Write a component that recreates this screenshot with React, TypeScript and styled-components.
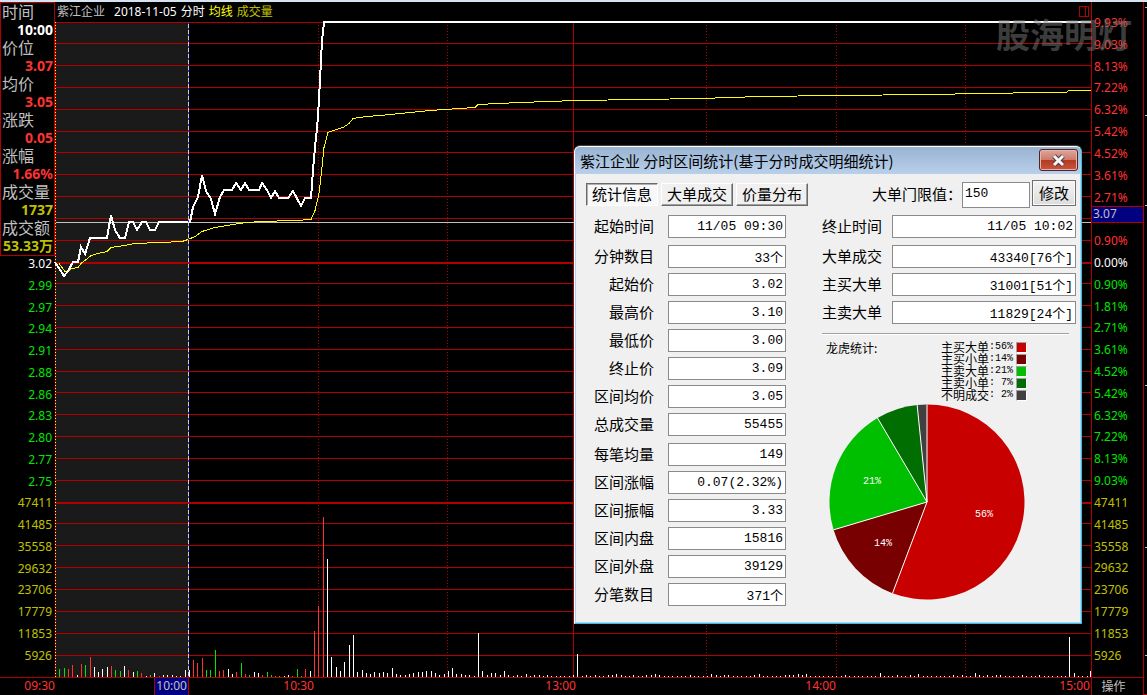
import React from "react";
import styled, { createGlobalStyle, css } from "styled-components";

const RED_LINE = "#b00000";
const RED_TEXT = "#ff3232";
const GREEN_TEXT = "#00e600";
const OLIVE_TEXT = "#c0c000";
const SILVER = "#c0c0c0";
const UI_FONT = `"Noto Sans", "Noto Sans CJK SC", sans-serif`;
const CJK_FONT = `"Noto Sans CJK SC", sans-serif`;
const MONO_FONT = `"Liberation Mono", "Noto Sans CJK SC", monospace`;

/* ---------- data ---------- */

const quote = [
  { label: "时间", value: "10:00", color: "#ffffff" },
  { label: "价位", value: "3.07", color: RED_TEXT },
  { label: "均价", value: "3.05", color: RED_TEXT },
  { label: "涨跌", value: "0.05", color: RED_TEXT },
  { label: "涨幅", value: "1.66%", color: RED_TEXT },
  { label: "成交量", value: "1737", color: OLIVE_TEXT },
  { label: "成交额", value: "53.33万", color: OLIVE_TEXT },
];

const volumeScale = ["47411", "41485", "35558", "29632", "23706", "17779", "11853", "5926"];
const lowerPrices = ["2.99", "2.97", "2.94", "2.91", "2.88", "2.86", "2.83", "2.80", "2.77", "2.75"];
const risePercents = ["9.93%", "9.03%", "8.13%", "7.22%", "6.32%", "5.42%", "4.52%", "3.61%", "2.71%", "", "0.90%"];
const fallPercents = ["0.90%", "1.81%", "2.71%", "3.61%", "4.52%", "5.42%", "6.32%", "7.22%", "8.13%", "9.03%"];

const gridLines = [
  22, 43, 65, 87, 109, 131, 152, 174, 196, 218, 240, 283, 305, 327, 349, 371, 392, 414, 436, 458,
  480, 523, 545, 567, 589, 611, 633, 655,
];

const priceLine =
  "55,262 64,276 68,271 73,262 78,262 81,247 85,254 90,238 107,238 111,215 115,230 120,238 125,238 129,222 133,222 137,230 142,222 146,222 150,230 155,230 159,222 190,222 193,207 198,197 202,175 206,191 211,199 215,214 220,197 224,190 232,190 236,183 241,190 245,183 249,190 259,190 262,183 267,190 271,198 275,191 279,198 288,198 293,191 301,206 305,198 311,198 313,170 315,147 317,128 318,117 319,98 320,80 321,60 322,41 324,22 1091,22";

const averageLine =
  "59,263 65,271 68,271 72,268 78,267 81,263 85,260 91,255 98,253 107,251 111,247 124,245 135,243 160,242 182,241 188,239 195,236 202,231 215,227 239,223 248,222 260,221 295,220 311,219 315,210 319,193 322,167 324,147 328,132 336,129 343,127 349,123 353,118 367,116 380,115 430,110 475,107 478,104 520,102 576,100 640,99 700,98 760,96 836,95 930,94 981,93 1046,92 1066,92 1069,90 1091,90";

/* One token per minute: bar height, with r or g for a rise or a fall. */
const volumeBars = (
  "8g 9g 8r 12r 2 13r 12g 20r 10 5 8 10 11r 7g 6g 11 7r 5 6g 4r 1 2g 4 1r 2 2 2 1 1 7 7 " +
  "17r 14r 19r 7g 7g 27g 6r 7r 8 3 5r 14g 3r 2g 5 4 2r 5g 2g 1g 1g 1 2 1r 8g 1g 8r 6 46r " +
  "71r 160r 118 20 10 6 15 32 42 5 7 4 3 5 4 5 4 9 3 2 2 3 4 5 5 6 6 4 2 3 6 9 3 3 2 2 1 44 " +
  "6 2 4 4 2 6 2 1 2 1 3 1 2 2 1 2 1 1 1 1 1 2 23 " +
  "1 2 1 2 1 1 2 2 3 2 1 1 2 1 1 2 2 3 2 1 1 1 1 1 1 2 1 1 1 1 3 2 1 2 2 1 1 1 1 1 2 3 " +
  "1 1 1 1 1 2 2 2 3 2 3 1 1 1 1 1 1 1 1 2 1 1 1 1 1 1 1 4 1 1 1 2 1 1 2 1 3 1 1 1 1 1 1 1 2 1 2 1 1 4 " +
  "2 1 2 1 2 2 1 1 1 1 2 1 1 1 2 1 1 1 1 1 1 40 4 1 1 1 6"
).split(" ");

const barColor = (token: string) =>
  token.endsWith("r") ? RED_TEXT : token.endsWith("g") ? GREEN_TEXT : "#ffffff";

type FieldData = { label: string; value: string };

const leftFields: FieldData[][] = [
  [{ label: "起始时间", value: "11/05 09:30" }],
  [
    { label: "分钟数目", value: "33个" },
    { label: "起始价", value: "3.02" },
    { label: "最高价", value: "3.10" },
    { label: "最低价", value: "3.00" },
    { label: "终止价", value: "3.09" },
    { label: "区间均价", value: "3.05" },
    { label: "总成交量", value: "55455" },
  ],
  [
    { label: "每笔均量", value: "149" },
    { label: "区间涨幅", value: "0.07(2.32%)" },
    { label: "区间振幅", value: "3.33" },
    { label: "区间内盘", value: "15816" },
    { label: "区间外盘", value: "39129" },
    { label: "分笔数目", value: "371个" },
  ],
];

const rightFields: FieldData[][] = [
  [{ label: "终止时间", value: "11/05 10:02" }],
  [
    { label: "大单成交", value: "43340[76个]" },
    { label: "主买大单", value: "31001[51个]" },
    { label: "主卖大单", value: "11829[24个]" },
  ],
];

const slices = [
  { label: "主买大单", percent: "56%", color: "#c80000", from: 0, to: 200.7 },
  { label: "主买小单", percent: "14%", color: "#780000", from: 200.7, to: 253.4 },
  { label: "主卖大单", percent: "21%", color: "#00be00", from: 253.4, to: 329.5 },
  { label: "主卖小单", percent: " 7%", color: "#006e00", from: 329.5, to: 354.2 },
  { label: "不明成交", percent: " 2%", color: "#404040", from: 354.2, to: 360 },
];

/* ---------- page ---------- */

const GlobalStyle = createGlobalStyle`
  *, *::before, *::after { box-sizing: border-box; }
  body { margin: 0; background: #000; }
  ul, dl, dd { margin: 0; padding: 0; list-style: none; }
`;

const Screen = styled.main`
  position: relative;
  display: grid;
  grid-template-columns: 55px 1fr 52px 4px;
  grid-template-rows: 2px 20px 1fr 17px;
  height: 100vh;
  min-height: 660px;
  overflow: hidden;
  background: #000;
  font: 12px/14px ${UI_FONT};
`;

const TopStrip = styled.div`
  grid-column: 1 / -1;
  background: #d6e4f2;
`;

const LeftColumn = styled.aside`
  grid-column: 1;
  grid-row: 2 / 4;
  display: flex;
  flex-direction: column;
  border-bottom: 1px solid ${RED_LINE};
`;

const QuoteBox = styled.dl`
  border: 1px solid ${RED_LINE};
  line-height: 18px;
  white-space: nowrap;
`;

const QuoteLabel = styled.dt`
  padding-left: 1px;
  color: ${SILVER};
  font-family: ${CJK_FONT};
  font-size: 16px;
  line-height: 16px;
  height: 18px;
`;

const QuoteValue = styled.dd<{ $color: string }>`
  height: 18px;
  padding-right: 1px;
  color: ${(p) => p.$color};
  font-size: 14px;
  font-weight: 700;
  text-align: right;
`;

const Scale = styled.ul<{ $align: "left" | "right" }>`
  flex: 1;
  display: flex;
  flex-direction: column;
  justify-content: space-between;
  text-align: ${(p) => p.$align};
  padding: ${(p) => (p.$align === "right" ? "1px 3px 14px 0" : "14px 0 14px 2px")};
`;

const ScaleItem = styled.li<{ $color: string }>`
  height: 14px;
  color: ${(p) => p.$color};
`;

const ChartHeader = styled.header`
  grid-column: 2;
  grid-row: 2;
  display: flex;
  align-items: center;
  gap: 4px;
  padding: 0 1px 0 2px;
  white-space: nowrap;
`;

const HeaderText = styled.span<{ $color: string; $wide?: boolean }>`
  color: ${(p) => p.$color};
  margin-right: ${(p) => (p.$wide ? "5px" : "0")};
`;

const PaneIcon = styled.svg`
  width: 11px;
  height: 12px;
  margin-left: auto;
`;

const Plot = styled.svg`
  grid-column: 2;
  grid-row: 3;
  display: block;
  width: 100%;
  height: 100%;
  min-height: 0;
  overflow: visible;
`;

const RightColumn = styled.aside`
  grid-column: 3;
  grid-row: 2 / 4;
  position: relative;
  display: flex;
  flex-direction: column;
  border-left: 1px solid ${RED_LINE};
  border-bottom: 1px solid ${RED_LINE};
`;

const CursorPrice = styled.span`
  position: absolute;
  top: 204px;
  left: 0;
  right: 0;
  height: 17px;
  padding-left: 1px;
  border: solid ${RED_LINE};
  border-width: 1px 0;
  background: #000080;
  color: ${SILVER};
`;

const EdgeStrip = styled.svg`
  grid-column: 4;
  grid-row: 2 / 5;
  width: 4px;
  height: 100%;
  min-height: 0;
  border-left: 1px solid ${RED_LINE};
`;

const TimeAxis = styled.footer`
  grid-column: 1 / 3;
  grid-row: 4;
  display: grid;
  grid-template-columns: 56px 133fr 126fr 262fr 260fr 254fr;
  justify-items: end;
`;

const Tick = styled.span<{ $active?: boolean }>`
  height: 17px;
  padding-right: 1px;
  line-height: 16px;
  color: ${RED_TEXT};
  ${(p) =>
    p.$active &&
    css`
      padding-left: 1px;
      border: solid ${RED_LINE};
      border-width: 0 1px;
      background: #000080;
      color: ${SILVER};
    `}
`;

const OperateButton = styled.button`
  grid-column: 3;
  grid-row: 4;
  padding: 0 8px 0 0;
  border: 0;
  border-left: 1px solid ${RED_LINE};
  background: #000;
  color: ${SILVER};
  font: 12px/16px ${UI_FONT};
  text-align: center;
`;

const Watermark = styled.div`
  position: absolute;
  top: 10px;
  right: 15px;
  color: rgba(120, 120, 120, 0.5);
  font: 700 34px/48px ${CJK_FONT};
  pointer-events: none;
`;

/* ---------- dialog ---------- */

const DialogWindow = styled.section`
  position: absolute;
  top: 146px;
  right: 65px;
  width: 508px;
  border: 1px solid #fff;
  border-right-color: #37bfe0;
  border-bottom-color: #37bfe0;
  border-radius: 6px 6px 0 0;
  background: #f0f0f0;
  box-shadow: inset 1px 0 #b5d0ec, inset -1px -1px #b5d0ec, 0 -1px 1px #444;
  color: #000;
  font: 15px/20px ${CJK_FONT};
`;

const TitleBar = styled.header`
  display: flex;
  align-items: flex-start;
  justify-content: space-between;
  height: 27px;
  padding: 2px 3px 0 5px;
  border-radius: 5px 5px 0 0;
  background: linear-gradient(#98b3d2, #b9d0ea);
`;

const DialogTitle = styled.h1`
  margin: 0;
  font: 400 15px/24px ${CJK_FONT};
`;

const CloseButton = styled.button`
  display: flex;
  align-items: center;
  justify-content: center;
  width: 39px;
  height: 22px;
  padding: 0;
  border: 1px solid #50222b;
  border-radius: 3px;
  background: linear-gradient(#dca79b, #cf7a6a 48%, #b43a22 52%, #c9553c);
  box-shadow: inset 0 0 0 1px #e6b5a9;
`;

const DialogBody = styled.div`
  display: flex;
  flex-direction: column;
  gap: 7px;
  padding: 6px 5px 17px 11px;
`;

const Toolbar = styled.div`
  display: flex;
  align-items: center;
  justify-content: space-between;
  height: 28px;
`;

const Tabs = styled.div`
  display: flex;
  gap: 3px;
`;

const Tab = styled.button<{ $active?: boolean }>`
  width: 72px;
  height: 23px;
  padding: 0;
  border: 1px solid;
  border-color: ${(p) => (p.$active ? "#696969 #fff #fff #696969" : "#fff #696969 #696969 #fff")};
  box-shadow: ${(p) => (p.$active ? "inset 1px 1px #b0b0b0" : "inset -1px -1px #a0a0a0")};
  background: ${(p) => (p.$active ? "#f8f8f8" : "#f0f0f0")};
  color: #000;
  font: 15px/20px ${CJK_FONT};
`;

const Threshold = styled.form`
  display: flex;
  align-items: center;
  height: 28px;
`;

const ThresholdLabel = styled.label`
  width: 90px;
  white-space: nowrap;
`;

const ThresholdInput = styled.input`
  align-self: flex-end;
  width: 68px;
  height: 26px;
  margin-right: 2px;
  padding: 0 2px 3px;
  border: 1px solid #8a8a8a;
  background: #fff;
  color: #000;
  font: 13px/20px ${MONO_FONT};
`;

const ApplyButton = styled.button`
  align-self: flex-start;
  width: 44px;
  height: 26px;
  padding: 0;
  border: 1px solid #707070;
  background: linear-gradient(#f4f4f4, #dcdcdc);
  box-shadow: inset 0 0 0 1px #fafafa;
  color: #000;
  font: 15px/20px ${CJK_FONT};
`;

const Columns = styled.div`
  display: flex;
  justify-content: space-between;
`;

const Column = styled.div<{ $width: number }>`
  width: ${(p) => p.$width}px;
`;

const Groups = styled.div`
  display: flex;
  flex-direction: column;
  gap: 7px;
`;

const Group = styled.div`
  display: flex;
  flex-direction: column;
  gap: 5px;
`;

const FieldRow = styled.div<{ $labelWidth: number }>`
  display: grid;
  grid-template-columns: ${(p) => p.$labelWidth}px 1fr;
  align-items: start;
  column-gap: ${(p) => (p.$labelWidth > 60 ? 14 : 10)}px;
  height: 23px;
`;

const FieldLabel = styled.label`
  line-height: 21px;
  text-align: right;
  white-space: nowrap;
`;

const FieldInput = styled.input`
  width: 100%;
  height: 23px;
  min-width: 0;
  padding: 0 2px;
  border: 1px solid #8a8a8a;
  background: #fff;
  color: #000;
  font: 13px/20px ${MONO_FONT};
  text-align: right;
`;

const Divider = styled.hr`
  height: 2px;
  margin: 9px 7px 6px 0;
  border: 0;
  border-top: 1px solid #a0a0a0;
  border-bottom: 1px solid #fff;
`;

const Summary = styled.div`
  display: flex;
  justify-content: space-between;
  padding: 0 49px 0 4px;
  font: 12px/14px ${CJK_FONT};
`;

const Legend = styled.ul`
  width: 86px;
`;

const LegendItem = styled.li`
  display: flex;
  align-items: center;
  height: 12px;
  line-height: 12px;
  white-space: pre;
`;

const LegendValue = styled.span`
  flex: 1;
  font: 10px/12px ${MONO_FONT};
`;

const Swatch = styled.i<{ $color: string }>`
  width: 11px;
  height: 11px;
  border: 1px solid;
  border-color: #a0a0a0 #fff #fff #a0a0a0;
  background: ${(p) => p.$color};
`;

const Pie = styled.svg`
  display: block;
  width: 196px;
  height: 196px;
  margin: 3px 0 0 7px;
`;

const PieText = styled.text`
  fill: #fff;
  font: 10px ${MONO_FONT};
  text-anchor: middle;
`;

/* ---------- parts ---------- */

function FieldGroups({ groups, labelWidth }: { groups: FieldData[][]; labelWidth: number }) {
  return (
    <Groups>
      {groups.map((group) => (
        <Group key={group[0].label}>
          {group.map((f) => (
            <FieldRow key={f.label} $labelWidth={labelWidth}>
              <FieldLabel htmlFor={f.label}>{f.label}</FieldLabel>
              <FieldInput id={f.label} readOnly value={f.value} />
            </FieldRow>
          ))}
        </Group>
      ))}
    </Groups>
  );
}

const pointAt = (deg: number, r = 97.5) => {
  const a = (deg * Math.PI) / 180;
  return `${(98 + r * Math.sin(a)).toFixed(2)} ${(98 - r * Math.cos(a)).toFixed(2)}`;
};

function PieChart() {
  return (
    <Pie viewBox="0 0 196 196" role="img" aria-label="龙虎统计">
      {slices.map((s) => (
        <path
          key={s.label}
          fill={s.color}
          d={`M98 98 L${pointAt(s.from)} A97.5 97.5 0 ${s.to - s.from > 180 ? 1 : 0} 1 ${pointAt(s.to)} Z`}
        />
      ))}
      {slices.map((s) => (
        <path key={s.label} d={`M98 98 L${pointAt(s.from)}`} stroke="#fff" strokeWidth="1" />
      ))}
      <PieText x="155" y="113">56%</PieText>
      <PieText x="54" y="142">14%</PieText>
      <PieText x="43" y="80">21%</PieText>
    </Pie>
  );
}

function IntradayPlot() {
  return (
    <Plot viewBox="55 22 1036 656" preserveAspectRatio="none" shapeRendering="crispEdges">
      <rect x="56" y="22" width="132" height="655" fill="#1a1a1a" />
      {gridLines.map((y) => (
        <rect key={y} x="56" y={y} width="1035" height="1" fill={RED_LINE} />
      ))}
      <rect x="56" y="262" width="1035" height="2" fill={RED_LINE} />
      <rect x="56" y="502" width="1035" height="2" fill={RED_LINE} />
      {[318, 447, 706, 836, 965].map((x) => (
        <path key={x} d={`M${x + 0.5} 25V677`} stroke={RED_LINE} strokeDasharray="1 2" />
      ))}
      <rect x="573" y="22" width="1" height="656" fill={RED_LINE} />
      <path d="M55.5 22V677" stroke={RED_LINE} />
      <path d="M55.5 22V677" stroke="#ffff40" strokeDasharray="1 2" />
      {volumeBars.map((token, i) => {
        const h = parseInt(token, 10);
        return (
          <rect
            key={i}
            x={Math.min(1090, 55 + Math.round((i + 1) * 4.317))}
            y={677 - h}
            width="1"
            height={h}
            fill={barColor(token)}
          />
        );
      })}
      <rect x="56" y="222" width="1035" height="1" fill={SILVER} />
      <polyline
        points={averageLine}
        transform="translate(0 0.5)"
        fill="none"
        stroke="#ffff00"
        strokeWidth="1"
      />
      <polyline points={priceLine} fill="none" stroke="#fff" strokeWidth="2" />
      <path d="M188.5 22V677" stroke="#d0d0d0" />
      <path d="M188.5 22V677" stroke="#3030e0" strokeDasharray="2 4" />
      <rect x="55" y="677" width="1036" height="1" fill={RED_LINE} />
    </Plot>
  );
}

function StatisticsDialog() {
  return (
    <DialogWindow role="dialog" aria-labelledby="dialog-title">
      <TitleBar>
        <DialogTitle id="dialog-title">紫江企业 分时区间统计(基于分时成交明细统计)</DialogTitle>
        <CloseButton type="button" aria-label="关闭">
          <svg width="15" height="13" viewBox="0 0 15 13">
            <path d="M3 2l9 9M12 2l-9 9" stroke="#503c48" strokeWidth="5" />
            <path d="M3 2l9 9M12 2l-9 9" stroke="#f6f6f6" strokeWidth="3" />
          </svg>
        </CloseButton>
      </TitleBar>
      <DialogBody>
        <Toolbar>
          <Tabs>
            <Tab type="button" $active>统计信息</Tab>
            <Tab type="button">大单成交</Tab>
            <Tab type="button">价量分布</Tab>
          </Tabs>
          <Threshold onSubmit={(e) => e.preventDefault()}>
            <ThresholdLabel htmlFor="threshold">大单门限值：</ThresholdLabel>
            <ThresholdInput id="threshold" defaultValue="150" />
            <ApplyButton type="submit">修改</ApplyButton>
          </Threshold>
        </Toolbar>
        <Columns>
          <Column $width={200}>
            <FieldGroups groups={leftFields} labelWidth={68} />
          </Column>
          <Column $width={254}>
            <FieldGroups groups={rightFields} labelWidth={60} />
            <Divider />
            <Summary>
              <span>龙虎统计:</span>
              <Legend>
                {slices.map((s) => (
                  <LegendItem key={s.label}>
                    {s.label}
                    <LegendValue>:{s.percent}</LegendValue>
                    <Swatch $color={s.color} />
                  </LegendItem>
                ))}
              </Legend>
            </Summary>
            <PieChart />
          </Column>
        </Columns>
      </DialogBody>
    </DialogWindow>
  );
}

export default function App() {
  return (
    <>
      <GlobalStyle />
      <Screen>
        <TopStrip />
        <LeftColumn>
          <QuoteBox>
            {quote.map((q) => (
              <React.Fragment key={q.label}>
                <QuoteLabel>{q.label}</QuoteLabel>
                <QuoteValue $color={q.color}>{q.value}</QuoteValue>
              </React.Fragment>
            ))}
          </QuoteBox>
          <Scale $align="right">
            <ScaleItem $color="#fff">3.02</ScaleItem>
            {lowerPrices.map((v) => (
              <ScaleItem key={v} $color={GREEN_TEXT}>{v}</ScaleItem>
            ))}
            {volumeScale.map((v) => (
              <ScaleItem key={v} $color={OLIVE_TEXT}>{v}</ScaleItem>
            ))}
          </Scale>
        </LeftColumn>
        <ChartHeader>
          <HeaderText $color={SILVER} $wide>紫江企业</HeaderText>
          <HeaderText $color="#fff">2018-11-05</HeaderText>
          <HeaderText $color="#fff">分时</HeaderText>
          <HeaderText $color="#ffff00">均线</HeaderText>
          <HeaderText $color={OLIVE_TEXT}>成交量</HeaderText>
          <PaneIcon viewBox="0 0 11 12" shapeRendering="crispEdges">
            <path d="M.5 .5h9v10h-9zM6.500 .5v10" fill="none" stroke={RED_LINE} />
          </PaneIcon>
        </ChartHeader>
        <IntradayPlot />
        <RightColumn>
          <Scale $align="left">
            {risePercents.map((v) => (
              <ScaleItem key={v} $color={RED_TEXT}>{v}</ScaleItem>
            ))}
            <ScaleItem $color="#fff">0.00%</ScaleItem>
            {fallPercents.map((v) => (
              <ScaleItem key={v} $color={GREEN_TEXT}>{v}</ScaleItem>
            ))}
            {volumeScale.map((v) => (
              <ScaleItem key={v} $color={OLIVE_TEXT}>{v}</ScaleItem>
            ))}
          </Scale>
          <CursorPrice>3.07</CursorPrice>
        </RightColumn>
        <EdgeStrip viewBox="0 0 3 693" preserveAspectRatio="none" shapeRendering="crispEdges">
          {[5, 113, 203, 383, 545, 653].map((y) => (
            <rect key={y} x="1" y={y} width="2" height="1" fill={SILVER} />
          ))}
          <rect x="0" y="692" width="3" height="1" fill={RED_LINE} />
        </EdgeStrip>
        <TimeAxis>
          <Tick>09:30</Tick>
          <Tick $active>10:00</Tick>
          <Tick>10:30</Tick>
          <Tick>13:00</Tick>
          <Tick>14:00</Tick>
          <Tick>15:00</Tick>
        </TimeAxis>
        <OperateButton type="button">操作</OperateButton>
        <Watermark>股海明灯</Watermark>
        <StatisticsDialog />
      </Screen>
    </>
  );
}
